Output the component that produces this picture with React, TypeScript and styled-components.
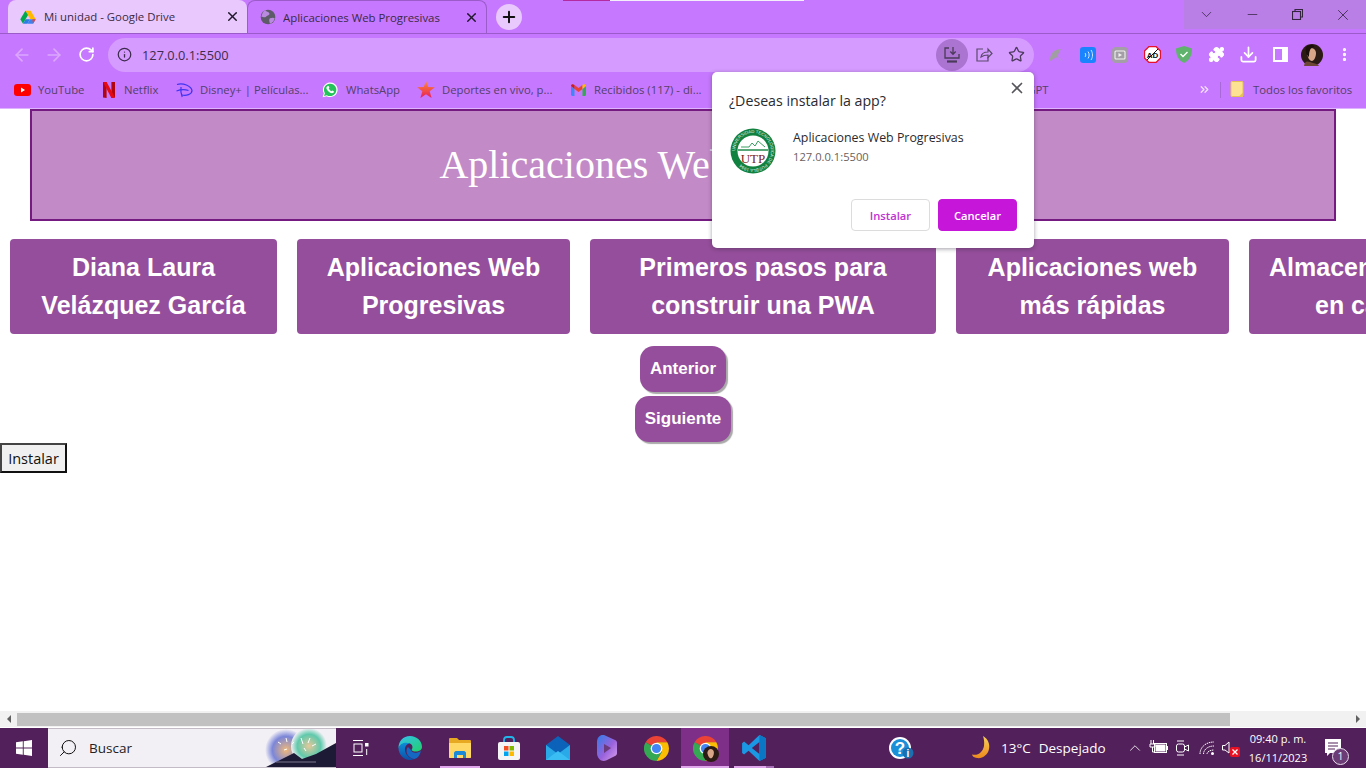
import React from "react";
import styled, { createGlobalStyle } from "styled-components";
import { ArrowLeft, ArrowRight, RotateCw, Info, Star, Puzzle, Download, EllipsisVertical, X, Plus, ChevronDown, Minus, ChevronUp, ChevronsRight, Search } from "lucide-react";

const UI = `"Open Sans", "Noto Sans", "Liberation Sans", sans-serif`;

const Global = createGlobalStyle`
  html, body { margin: 0; padding: 0; background: #fff; overflow: hidden; }
  * { box-sizing: border-box; }
`;

const Screen = styled.div`
  position: relative;
  width: 1366px;
  height: 768px;
  display: flex;
  flex-direction: column;
  overflow: hidden;
  font-family: ${UI};
`;
const EdgeStrip = styled.div`
  position: absolute;
  top: 0;
  left: 563px;
  width: 241px;
  height: 1px;
  background: linear-gradient(90deg, #b42aa0 0, #b42aa0 47px, #f3eefa 47px, #f3eefa 100%);
`;
const TabStrip = styled.div`
  height: 34px;
  flex: none;
  display: flex;
  align-items: flex-start;
  padding-left: 8px;
  background: #c678fe;
  border-bottom: 1px solid #9b5cc9;
`;
const Tab = styled.div<{ $active?: boolean; $w: number }>`
  width: ${(p) => p.$w}px;
  height: 33px;
  flex: none;
  display: flex;
  align-items: center;
  gap: ${(p) => (p.$active ? 7 : 8)}px;
  padding: 0 7px 0 12px;
  border-radius: 8px 8px 0 0;
  background: ${(p) => (p.$active ? "#c678fe" : "#e9c8fe")};
  border: ${(p) => (p.$active ? "1px solid #9b5cc9" : "none")};
  border-bottom: none;
  color: #3a2a44;
  font-size: 11.4px;
  white-space: nowrap;
`;
const TabTitle = styled.span`
  flex: 1;
  overflow: hidden;
`;
const CloseGlyph = styled(X)`
  color: #20182a;
  flex: none;
`;
const NewTab = styled.div`
  width: 26px;
  height: 26px;
  margin: 4px 0 0 9px;
  border-radius: 50%;
  background: #e9c8fe;
  display: flex;
  align-items: center;
  justify-content: center;
  color: #111;
`;
const WindowControls = styled.div`
  margin-left: auto;
  display: flex;
  height: 29px;
  width: 182px;
  background: #ba7fe6;
`;
const WinBtn = styled.div`
  flex: 1;
  display: flex;
  align-items: center;
  justify-content: center;
  color: #33243f;
`;
const Toolbar = styled.div`
  height: 43px;
  flex: none;
  display: flex;
  align-items: center;
  padding: 0 0 2px 6px;
  background: #c678fe;
`;
const ToolBtn = styled.div<{ $tone?: string }>`
  width: 32px;
  height: 32px;
  flex: none;
  display: flex;
  align-items: center;
  justify-content: center;
  color: ${(p) => p.$tone || "#fff"};
`;
const Omnibox = styled.div`
  width: 926px;
  height: 34px;
  margin: 0 6px;
  border-radius: 17px;
  background: #d59bff;
  display: flex;
  align-items: center;
  padding: 0 2px 0 9px;
  color: #3d2b4d;
  font-size: 12.8px;
  flex: none;
`;
const Url = styled.span`
  margin-left: 10px;
  flex: 1;
`;
const InstallHalo = styled(ToolBtn)`
  border-radius: 50%;
  background: #ab74d1;
`;
const Bookmarks = styled.div`
  height: 32px;
  flex: none;
  display: flex;
  align-items: center;
  padding-bottom: 6px;
  background: #c678fe;
  border-bottom: 1px solid #dfb4ff;
  color: #54406a;
  font-size: 11.3px;
  white-space: nowrap;
`;
const Bookmark = styled.div<{ $left: number; $gap: number; $w: number }>`
  display: flex;
  flex: none;
  align-items: center;
  gap: ${(p) => p.$gap}px;
  margin-left: ${(p) => p.$left}px;
  width: ${(p) => p.$w}px;
`;
const Divider = styled.div`
  width: 1px;
  height: 16px;
  margin: 0 9px 0 7px;
  background: #a869d8;
`;
const Page = styled.main`
  flex: 1;
  min-height: 0;
  overflow: hidden;
  background: #fff;
  display: flex;
  flex-direction: column;
  align-items: flex-start;
`;
const Banner = styled.header`
  align-self: stretch;
  height: 112px;
  flex: none;
  margin: 0 30px;
  padding-bottom: 2px;
  border: 2px solid #751a80;
  background: #c28bc7;
  display: flex;
  align-items: center;
  justify-content: center;
`;
const BannerTitle = styled.h1`
  margin: 0;
  font: 400 40px "Liberation Serif", serif;
  color: #fff;
`;
const CardRow = styled.nav`
  margin-top: 18px;
  display: flex;
  gap: 20px;
  padding-left: 10px;
`;
const Card = styled.div<{ $w: number }>`
  width: ${(p) => p.$w}px;
  height: 95px;
  flex: none;
  padding: 9px 20px;
  border-radius: 4px;
  background: #954e9b;
  color: #fff;
  text-align: center;
  font: 700 25px/38px "Liberation Sans", sans-serif;
`;
const Pager = styled.div`
  align-self: center;
  margin-top: 12px;
  display: flex;
  flex-direction: column;
  align-items: center;
  gap: 4px;
`;
const PagerBtn = styled.button<{ $w: number }>`
  width: ${(p) => p.$w}px;
  height: 46px;
  padding: 0;
  border: none;
  border-radius: 14px;
  background: #954e9b;
  color: #fff;
  font: 700 17px "Liberation Sans", sans-serif;
  box-shadow: 2px 2px 1px #a9a9a9;
`;
const PlainBtn = styled.button`
  margin-top: 1px;
  width: 67px;
  height: 30px;
  padding: 0;
  border: 2px solid #111;
  border-left-color: #444;
  border-top-color: #444;
  background: #f0f0f0;
  color: #111;
  font: 400 14.5px ${UI};
`;
const HScroll = styled.div`
  height: 16px;
  margin-bottom: 1px;
  flex: none;
  display: flex;
  align-items: center;
  background: #f1f1f1;
  color: #666;
  justify-content: space-between;
`;
const Thumb = styled.div`
  width: 1213px;
  height: 13px;
  margin-right: auto;
  background: #c1c1c1;
`;
const ArrowCell = styled.div<{ $dir: "l" | "r" }>`
  width: 17px;
  flex: none;
  display: flex;
  justify-content: center;
  &::before {
    content: "";
    border-style: solid;
    border-width: 4px 0 4px 4px;
    border-color: transparent transparent transparent #606060;
    transform: ${(p) => (p.$dir === "l" ? "rotate(180deg)" : "none")};
  }
`;
const Taskbar = styled.footer`
  height: 40px;
  flex: none;
  display: flex;
  align-items: center;
  background: #52205a;
  color: #fff;
`;
const StartBtn = styled.div`
  width: 48px;
  height: 40px;
  flex: none;
  display: flex;
  align-items: center;
  justify-content: center;
`;
const SearchBox = styled.div`
  position: relative;
  width: 288px;
  height: 40px;
  flex: none;
  display: flex;
  align-items: center;
  gap: 11px;
  padding-left: 10px;
  background: #f3f0f5;
  border: 1px solid #c3bcc6;
  border-width: 1px 0;
  color: #222;
  font-size: 13.5px;
  overflow: hidden;
`;
const SearchArt = styled.svg`
  position: absolute;
  right: 0;
  top: -1px;
`;
const TaskBtn = styled.div<{ $w: number; $active?: boolean; $line?: number; $lineLeft?: number; $stack?: boolean; $left?: number }>`
  position: relative;
  width: ${(p) => p.$w}px;
  margin-left: ${(p) => p.$left ?? 0}px;
  height: 40px;
  flex: none;
  display: flex;
  align-items: center;
  justify-content: center;
  background: ${(p) => (p.$active ? "#7e3089" : "transparent")};
  &::after {
    content: "";
    display: ${(p) => (p.$line ? "block" : "none")};
    position: absolute;
    bottom: 0;
    left: ${(p) => p.$lineLeft ?? 5}px;
    width: ${(p) => p.$line}px;
    height: 2px;
    background: #e0a6ec;
    box-shadow: ${(p) => (p.$stack ? "8px 0 0 #a76fb5" : "none")};
  }
`;
const TaskAvatar = styled.svg`
  position: absolute;
  left: 22px;
  top: 18px;
`;
const Weather = styled.div`
  margin-left: 52px;
  width: 153px;
  flex: none;
  display: flex;
  align-items: center;
  font-size: 13.5px;
  white-space: nowrap;
`;
const Temp = styled.span`
  margin-left: 9px;
  margin-right: 8px;
`;
const Tray = styled.div`
  display: flex;
  align-items: center;
`;
const TrayBtn = styled.div`
  width: 24px;
  height: 40px;
  display: flex;
  align-items: center;
  justify-content: center;
  flex: none;
`;
const Clock = styled.div`
  width: 70px;
  flex: none;
  font-size: 11px;
  line-height: 19px;
  text-align: center;
  white-space: nowrap;
`;
const Notif = styled.div`
  position: relative;
  margin-left: 12px;
  width: 26px;
  height: 40px;
  flex: none;
`;
const NotifBadge = styled.span`
  position: absolute;
  left: 7px;
  top: 20px;
  width: 17px;
  height: 17px;
  border-radius: 50%;
  border: 1.5px solid #e8dcec;
  background: #6b3c76;
  color: #fff;
  font-size: 10.5px;
  line-height: 14px;
  text-align: center;
`;
const NotifIcon = styled.svg`
  position: absolute;
  left: 0;
  top: 11px;
`;
const Popup = styled.aside`
  position: absolute;
  left: 712px;
  top: 72px;
  width: 322px;
  height: 176px;
  padding: 20px 17px 0;
  background: #fff;
  border-radius: 5px;
  box-shadow: 0 1px 4px rgba(50, 40, 60, 0.45);
  color: #2a2a2e;
`;
const PopupClose = styled(X)`
  position: absolute;
  right: 8px;
  top: 7px;
  color: #55555a;
`;
const PopupTitle = styled.div`
  font-size: 14.2px;
  line-height: 18px;
`;
const PopupBody = styled.div`
  display: flex;
  margin-top: 18px;
  gap: 17px;
  padding-left: 1px;
`;
const AppName = styled.div`
  margin-top: 1px;
  font-size: 12.4px;
  line-height: 17px;
`;
const AppUrl = styled.div`
  margin-top: 2px;
  font-size: 11.2px;
  line-height: 17px;
  color: #6a5f60;
`;
const PopupActions = styled.div`
  margin-top: 25px;
  display: flex;
  justify-content: flex-end;
  gap: 8px;
`;
const PopupBtn = styled.button<{ $primary?: boolean }>`
  width: 79px;
  height: 32px;
  padding: 0;
  border-radius: 4px;
  border: 1px solid ${(p) => (p.$primary ? "#c616d9" : "#dcdcdc")};
  background: ${(p) => (p.$primary ? "#c616d9" : "#fff")};
  color: ${(p) => (p.$primary ? "#fff" : "#c030d2")};
  font: 600 11.2px ${UI};
`;

const Drive = () => (
  <svg width="16" height="16" viewBox="0 0 24 24">
    <path d="M8 2.500h8l7.500 13h-8z" fill="#ffba00" />
    <path d="M8 2.500L.5 15.500l4 6.500L12 9z" fill="#00a94b" />
    <path d="M4.500 22l4-6.500H15L11 22z" fill="#2a7de1" />
    <path d="M11 22h8.500l4-6.500H15z" fill="#3b82f0" />
    <path d="M19.500 22l4-6.500h-5z" fill="#e8453c" />
  </svg>
);
const Globe = () => (
  <svg width="16" height="16" viewBox="0 0 24 24">
    <circle cx="12" cy="12" r="11" fill="#5d5a6a" />
    <path d="M8 1.500c1 3 5 2 6 5s-3 3-5 5-5 0-7 0C3 7 5 3 8 1.500zM15 14c3-1 6-1 7 0-1 4-3 7-7 8-1-3-2-6 0-8z" fill="#b98ae0" />
  </svg>
);
const YouTube = () => (
  <svg width="17" height="12" viewBox="0 0 17 12">
    <rect width="17" height="12" rx="3" fill="#f00" />
    <path d="M7 3.500l4 2.500-4 2.500z" fill="#fff" />
  </svg>
);
const Netflix = () => (
  <svg width="12" height="16" viewBox="0 0 12 16">
    <path d="M0 0h3.600v16L0 15.600z" fill="#b1060f" />
    <path d="M8.400 0H12v15.600l-3.600.4z" fill="#b1060f" />
    <path d="M0 0h3.600L12 15.600l-3.600.4z" fill="#e50914" />
  </svg>
);
const Disney = () => (
  <svg width="17" height="16" viewBox="0 0 17 16" fill="none" stroke="#3d34f2" strokeWidth="1.200">
    <path d="M1 2.500c6-2 14 1.500 15 6 0 4-6 5.500-10 4.500" />
    <path d="M5 5c-.4 3 0 7 1.200 10" />
    <path d="M0.500 9c4-1.500 9-1.500 12-.5" />
  </svg>
);
const WhatsApp = () => (
  <svg width="16" height="16" viewBox="0 0 24 24">
    <path d="M1 23l1.800-6A11 11 0 1 1 7 21.200z" fill="#fff" />
    <path d="M3 21l1.300-4.300A9.300 9.300 0 1 1 7.300 19.700z" fill="#25c35c" />
    <path d="M8 6.500c.6-1 1.600-1 2.100 0l1 2-1.100 1.300c1 1.900 2.200 3.100 4.100 4.100l1.300-1.100 2 1c1 .5 1 1.500 0 2.100-2 1.800-5 1-8-2s-3.900-5.400-1.400-7.400z" fill="#fff" />
  </svg>
);
const Sport = () => (
  <svg width="18" height="17" viewBox="0 0 24 23">
    <defs>
      <linearGradient id="sg" x1="0.500" y1="0" x2="0.500" y2="1">
        <stop offset="0" stopColor="#ff8a2e" />
        <stop offset="1" stopColor="#e81f5c" />
      </linearGradient>
    </defs>
    <path d="M12 0l3 8 9 .5-7 5.500 2.500 9L12 18l-7.500 5L7 14 0 8.500 9 8z" fill="url(#sg)" />
  </svg>
);
const Gmail = () => (
  <svg width="15" height="12" viewBox="0 0 15 12">
    <path d="M0 2v8.500C0 11.300.7 12 1.500 12H3.500V5z" fill="#4285f4" />
    <path d="M15 2v8.500c0 .8-.7 1.500-1.500 1.500h-2V5z" fill="#34a853" />
    <path d="M11.500 1L7.500 4 3.500 1v4l4 3 4-3z" fill="#ea4335" />
    <path d="M0 2c0-2 2-2.500 3.500-1V5z" fill="#c5221f" />
    <path d="M15 2c0-2-2-2.500-3.500-1V5z" fill="#fbbc04" />
  </svg>
);
const Folder = () => (
  <svg width="14" height="17" viewBox="0 0 14 17">
    <rect x="1" y="0.500" width="12" height="15" rx="1" fill="#fde293" stroke="#e5c258" />
    <path d="M9 15.500l4-4v4z" fill="#e5c258" />
  </svg>
);
const InstallIcon = () => (
  <svg width="18" height="18" viewBox="0 0 18 18" fill="none" stroke="#4b3a5a" strokeWidth="1.300">
    <path d="M6 2H2v10h14V8" />
    <path d="M10 1v7M7.300 5.500L10 8.300l2.700-2.800" />
    <path d="M4 15.500h10" strokeWidth="2.200" />
  </svg>
);
const ShareIcon = () => (
  <svg width="18" height="18" viewBox="0 0 18 18" fill="none" stroke="#5a4a6c" strokeWidth="1.200">
    <path d="M8 3H2v12h11v-4" />
    <path d="M6 11c.5-3.500 3.500-5 7-5V3l4 4.500-4 4V9c-3 0-5 .5-7 2z" />
  </svg>
);
const Umbrella = () => (
  <svg width="16" height="16" viewBox="0 0 16 16">
    <path d="M2 14C1.500 7 6 2 13 2l-2.500 4.500-1 3.500-3.500 1.500z" fill="#a09ea3" />
    <path d="M10 10l4 4" stroke="#b98ae0" strokeWidth="1.200" />
  </svg>
);
const WaveExt = () => (
  <svg width="16" height="16" viewBox="0 0 16 16" fill="none">
    <rect width="16" height="16" rx="3" fill="#1a84ff" />
    <path d="M5 6c1 1 1 3 0 4M8 4.500c1.500 2 1.500 5 0 7M11 3c2 3 2 7 0 10" stroke="#cfe4ff" strokeWidth="1" />
  </svg>
);
const CastExt = () => (
  <svg width="16" height="16" viewBox="0 0 16 16">
    <rect width="16" height="16" rx="4" fill="#a49ea6" />
    <rect x="3" y="4" width="10" height="8" rx="1" fill="none" stroke="#f3f3f3" strokeWidth="1.100" />
    <path d="M6.500 6l3.500 2-3.500 2z" fill="#f3f3f3" />
  </svg>
);
const AdBlock = () => (
  <svg width="17" height="17" viewBox="0 0 17 17">
    <path d="M5 .5h7L16.500 5v7L12 16.500H5L.5 12V5z" fill="#fff" stroke="#e8102a" strokeWidth="1.300" />
    <text x="8.500" y="11.500" textAnchor="middle" fontSize="8" fontWeight="700" fontFamily="Liberation Sans" fill="#111">AD</text>
    <path d="M14 3L3 14" stroke="#111" strokeWidth="1" />
  </svg>
);
const Shield = () => (
  <svg width="16" height="17" viewBox="0 0 16 17">
    <path d="M8 0l8 2.500C16 9 14 14 8 17 2 14 0 9 0 2.500z" fill="#5fb36d" />
    <path d="M4.500 8l2.500 2.500 4.500-4.500" fill="none" stroke="#fff" strokeWidth="1.400" />
  </svg>
);
const SidePanel = () => (
  <svg width="15" height="15" viewBox="0 0 15 15">
    <path d="M0 0h15v15H0zM2 2v11h7V2z" fill="#fff" fillRule="evenodd" />
  </svg>
);
const Avatar = ({ size = 22 }: { size?: number }) => (
  <svg width={size} height={size} viewBox="0 0 22 22">
    <circle cx="11" cy="11" r="11" fill="#2c1a14" />
    <path d="M8 5c3-2 7 0 7 4 0 4-2 8-4 8-3 0-4-4-5-7 0-2 1-4 2-5z" fill="#d9a589" />
    <path d="M3 22c1-7 5-4 9-3 3 1 5 1 6 3z" fill="#6d4636" />
    <path d="M5 3C9 0 14 1 13 3 9 3 8 8 8 13 5 11 4 6 5 3z" fill="#1b0e0b" />
  </svg>
);
const AppLogo = () => (
  <svg width="46" height="46" viewBox="0 0 46 46">
    <circle cx="23" cy="23" r="22.500" fill="#11813f" />
    <circle cx="23" cy="23" r="15.500" fill="#fff" />
    <path id="logoRing" d="M5 23a18 18 0 1 1 36 0a18 18 0 1 1-36 0" fill="none" />
    <text fontSize="4.300" fontFamily="Liberation Sans" fill="#e6f4ea">
      <textPath href="#logoRing">UNIVERSIDAD TECNOLÓGICA DE PUEBLA 1994</textPath>
    </text>
    <path d="M11 19h8l3-4 3 3 3-5 7 6" fill="none" stroke="#38a060" strokeWidth="1" />
    <path d="M8 22h30" stroke="#11813f" strokeWidth="1.400" />
    <text x="23" y="35" textAnchor="middle" fontFamily="Liberation Serif" fontSize="13" fill="#7a2320">UTP</text>
  </svg>
);
const WinLogo = () => (
  <svg width="16" height="16" viewBox="0 0 16 16" fill="#fff">
    <path d="M0 2.300L6.800 1.300V7.500H0zM7.700 1.200L16 0V7.500H7.700zM0 8.400H6.800V14.700L0 13.700zM7.700 8.400H16V16L7.700 14.800z" />
  </svg>
);
const TaskView = () => (
  <svg width="18" height="18" viewBox="0 0 18 18" fill="none" stroke="#fff" strokeWidth="1">
    <path d="M1 1.500h10M1 16.500h10" />
    <rect x="2" y="5" width="8" height="8" />
    <rect x="13.500" y="4.500" width="2.500" height="2.500" fill="#fff" />
    <path d="M14.700 10v6" />
  </svg>
);
const Edge = () => (
  <svg width="24" height="24" viewBox="0 0 24 24">
    <defs>
      <linearGradient id="eg" x1="0" y1="0" x2="1" y2="1">
        <stop offset="0" stopColor="#35c1f1" />
        <stop offset="1" stopColor="#1fd06a" />
      </linearGradient>
      <linearGradient id="eb" x1="0" y1="0" x2="0" y2="1">
        <stop offset="0" stopColor="#0c8fd8" />
        <stop offset="1" stopColor="#0c4fa8" />
      </linearGradient>
    </defs>
    <path d="M12 0c7 0 12 5 12 11 0 3-3 4.500-6 4.500-2 0-3.500-.5-4.500-1.500C15 12 15 9 12 7.500 8 6 3 8 .5 12 .5 5 5 0 12 0z" fill="url(#eg)" />
    <path d="M.5 12C2 7 8 5.500 12 7.500c-3 0-5.500 3-5 7 .5 4 4 8 9.500 8.500C14 24 12 24 11 24 5 23.500.5 18 .5 12z" fill="url(#eb)" />
    <path d="M13 14c1 3 5 4 10 1-1 4-3 7-6.500 8-4.500-.5-8-4-8-8 0-1.500 .5-3 1.500-4z" fill="#1467c2" />
  </svg>
);
const Explorer = () => (
  <svg width="24" height="22" viewBox="0 0 24 22">
    <path d="M1 2a1 1 0 0 1 1-1h7l2 2h11a1 1 0 0 1 1 1v16a1 1 0 0 1-1 1H2a1 1 0 0 1-1-1z" fill="#e8a922" />
    <path d="M1 6h22v14a1 1 0 0 1-1 1H2a1 1 0 0 1-1-1z" fill="#ffd866" />
    <path d="M6 21v-5c0-1 1-2 2-2h8c1 0 2 1 2 2v5h-3v-3H9v3z" fill="#1c8ad6" />
  </svg>
);
const Store = () => (
  <svg width="24" height="24" viewBox="0 0 24 24">
    <path d="M7 7V4a3 3 0 0 1 3-3h4a3 3 0 0 1 3 3v3" fill="none" stroke="#21b4e8" strokeWidth="1.800" />
    <rect x="1" y="6" width="22" height="18" rx="2" fill="#f5f5f5" />
    <rect x="7" y="10" width="4.500" height="4.500" fill="#f25022" />
    <rect x="12.500" y="10" width="4.500" height="4.500" fill="#7fba00" />
    <rect x="7" y="15.500" width="4.500" height="4.500" fill="#00a4ef" />
    <rect x="12.500" y="15.500" width="4.500" height="4.500" fill="#ffb900" />
  </svg>
);
const Mail = () => (
  <svg width="24" height="24" viewBox="0 0 24 24">
    <path d="M12 0l12 9v15H0V9z" fill="#0c62b8" />
    <path d="M0 9l12 9 12-9v15H0z" fill="#29a9e8" />
    <path d="M0 24l12-9 12 9z" fill="#39bdf3" />
  </svg>
);
const Copilot = () => (
  <svg width="20" height="26" viewBox="0 0 20 26">
    <defs>
      <linearGradient id="cp" x1="0" y1="0" x2="1" y2="1">
        <stop offset="0" stopColor="#2f7ee8" />
        <stop offset="0.550" stopColor="#9a62dc" />
        <stop offset="1" stopColor="#d9a0ea" />
      </linearGradient>
    </defs>
    <path d="M7 0l11 5c1.500.7 2 1.500 2 3v10c0 1.500-.5 2.300-2 3L9 25.500c-3 1-6 0-7.500-2.500C.5 21.500 0 20 0 18V7c0-4 3-8 7-7z" fill="url(#cp)" />
    <path d="M7 9l7 4-7 5z" fill="#6a3a7c" />
  </svg>
);
const Chrome = () => (
  <svg width="25" height="25" viewBox="0 0 24 24">
    <path d="M12 12L1.600 6A12 12 0 0 1 22.390 6H12z" fill="#ea4335" />
    <path d="M1.600 6A12 12 0 0 0 12 24l5.200-9L12 12z" fill="#34a853" />
    <path d="M22.390 6A12 12 0 0 1 12 24l5.200-9L12 6z" fill="#fbbc04" />
    <circle cx="12" cy="12" r="5.600" fill="#fff" />
    <circle cx="12" cy="12" r="4.400" fill="#4285f4" />
  </svg>
);
const VSCode = () => (
  <svg width="24" height="26" viewBox="0 0 22 24">
    <path d="M16 0l6 3v18l-6 3-10-9.500L1.800 18 0 16.500V7.500L1.800 6l4.200 3.500zM16 6.500L9 12l7 5.500z" fill="#1a98e4" fillRule="evenodd" />
    <path d="M16 0l6 3v18l-6 3z" fill="#0b76c4" />
  </svg>
);
const HelpIcon = () => (
  <svg width="26" height="24" viewBox="0 0 26 24">
    <circle cx="11" cy="12" r="11" fill="#fff" />
    <circle cx="11" cy="12" r="9" fill="#1b90d8" />
    <text x="11" y="18" textAnchor="middle" fontFamily="Liberation Sans" fontWeight="700" fontSize="17" fill="#fff">?</text>
    <circle cx="19" cy="17" r="5.500" fill="#1b6fb0" />
    <text x="19" y="21" textAnchor="middle" fontFamily="Liberation Sans" fontWeight="700" fontSize="10" fill="#fff">i</text>
  </svg>
);
const Moon = () => (
  <svg width="22" height="24" viewBox="0 0 18 24">
    <defs>
      <linearGradient id="mn" x1="0" y1="0" x2="0" y2="1">
        <stop offset="0" stopColor="#f8cf5a" />
        <stop offset="1" stopColor="#ec8a1c" />
      </linearGradient>
    </defs>
    <path d="M11 0c5 3 7 8 6 13-1 6-7 10-12 9-3-.5-5-2-5-3.500C6 20 11 16 12 10c.5-4 0-7-1-10z" fill="url(#mn)" />
  </svg>
);
const Battery = () => (
  <svg width="20" height="18" viewBox="0 0 20 18" fill="none" stroke="#fff" strokeWidth="1">
    <rect x="5.500" y="4.500" width="12" height="9" />
    <rect x="7" y="6" width="9" height="6" fill="#fff" />
    <path d="M18.500 7v4M2 1v4M4.500 1v4M1 5h5v3H1zM3.500 8v5h2" />
  </svg>
);
const Camera = () => (
  <svg width="18" height="18" viewBox="0 0 18 18" fill="none" stroke="#fff" strokeWidth="1">
    <rect x="2.500" y="5" width="8" height="8" rx="2" />
    <path d="M10.500 8l4-2v6l-4-2M3 2h7M3 16h7" />
  </svg>
);
const Wifi = () => (
  <svg width="18" height="18" viewBox="0 0 18 18" fill="none" stroke="#fff" strokeWidth="1" strokeDasharray="1.500 .7">
    <path d="M2 15C2 8 8 3 16 3" />
    <path d="M5.500 15c0-4 4-8 10.500-8" />
    <path d="M9 15c0-2 3-4 7-4" />
    <circle cx="14.500" cy="14.500" r="1.500" fill="#fff" stroke="none" />
  </svg>
);
const Speaker = () => (
  <svg width="20" height="20" viewBox="0 0 20 20">
    <path d="M1.500 7.500H4L8 4v11L4 12H1.500z" fill="none" stroke="#fff" strokeWidth="1" />
    <rect x="9" y="9" width="10" height="10" rx="2" fill="#e81123" />
    <path d="M11.500 11.500l5 5m0-5l-5 5" stroke="#fff" strokeWidth="1.300" />
  </svg>
);

const bookmarkData = [
  { icon: <YouTube />, text: "YouTube", left: 14, gap: 7, w: 89 },
  { icon: <Netflix />, text: "Netflix", left: 0, gap: 9, w: 73 },
  { icon: <Disney />, text: "Disney+ | Películas...", left: 0, gap: 7, w: 146 },
  { icon: <WhatsApp />, text: "WhatsApp", left: 0, gap: 8, w: 95 },
  { icon: <Sport />, text: "Deportes en vivo, p...", left: 0, gap: 7, w: 154 },
  { icon: <Gmail />, text: "Recibidos (117) - di...", left: 0, gap: 8, w: 150 },
  { icon: <span />, text: "Chat GPT", left: 279, gap: 0, w: 100 },
];
const cards = [
  { t: "Diana Laura Velázquez García", w: 267 },
  { t: "Aplicaciones Web Progresivas", w: 273 },
  { t: "Primeros pasos para construir una PWA", w: 346 },
  { t: "Aplicaciones web más rápidas", w: 273 },
  { t: "Almacenamiento en caché", w: 239 },
];

export default function App() {
  return (
    <Screen>
      <Global />
      <TabStrip>
        <Tab $w={239}>
          <Drive />
          <TabTitle>Mi unidad - Google Drive</TabTitle>
          <CloseGlyph size={15} strokeWidth={2.4} />
        </Tab>
        <Tab $active $w={240}>
          <Globe />
          <TabTitle>Aplicaciones Web Progresivas</TabTitle>
          <CloseGlyph size={15} strokeWidth={2.4} />
        </Tab>
        <NewTab>
          <Plus size={18} strokeWidth={2.6} />
        </NewTab>
        <WindowControls>
          <WinBtn><ChevronDown size={17} strokeWidth={1.1} /></WinBtn>
          <WinBtn><Minus size={15} strokeWidth={1.2} /></WinBtn>
          <WinBtn>
            <svg width="11" height="11" viewBox="0 0 11 11" fill="none" stroke="#33243f" strokeWidth="1.100">
              <rect x="0.500" y="2.500" width="8" height="8" />
              <path d="M3 2.500V.5h7.500V8H8.500" />
            </svg>
          </WinBtn>
          <WinBtn><X size={18} strokeWidth={1.1} /></WinBtn>
        </WindowControls>
      </TabStrip>
      <Toolbar>
        <ToolBtn $tone="#dca6ff"><ArrowLeft size={20} strokeWidth={2} /></ToolBtn>
        <ToolBtn $tone="#dca6ff"><ArrowRight size={20} strokeWidth={2} /></ToolBtn>
        <ToolBtn><RotateCw size={17} strokeWidth={2.4} /></ToolBtn>
        <Omnibox>
          <Info size={15} strokeWidth={2} />
          <Url>127.0.0.1:5500</Url>
          <InstallHalo><InstallIcon /></InstallHalo>
          <ToolBtn><ShareIcon /></ToolBtn>
          <ToolBtn $tone="#4b3a5a"><Star size={17} strokeWidth={1.8} /></ToolBtn>
        </Omnibox>
        <ToolBtn><Umbrella /></ToolBtn>
        <ToolBtn><WaveExt /></ToolBtn>
        <ToolBtn><CastExt /></ToolBtn>
        <ToolBtn><AdBlock /></ToolBtn>
        <ToolBtn><Shield /></ToolBtn>
        <ToolBtn><Puzzle size={17} fill="#fff" strokeWidth={1.5} /></ToolBtn>
        <ToolBtn><Download size={19} strokeWidth={2.2} /></ToolBtn>
        <ToolBtn><SidePanel /></ToolBtn>
        <ToolBtn><Avatar /></ToolBtn>
        <ToolBtn><EllipsisVertical size={17} strokeWidth={2.6} /></ToolBtn>
      </Toolbar>
      <Bookmarks>
        {bookmarkData.map((b) => (
          <Bookmark key={b.text} $left={b.left} $gap={b.gap} $w={b.w}>
            {b.icon}
            <span>{b.text}</span>
          </Bookmark>
        ))}
        <Bookmark $left={98} $gap={0} $w={15}>
          <ChevronsRight size={13} color="#f3e2ff" strokeWidth={2.4} />
        </Bookmark>
        <Divider />
        <Bookmark $left={0} $gap={9} $w={125}>
          <Folder />
          <span>Todos los favoritos</span>
        </Bookmark>
      </Bookmarks>
      <Page>
        <Banner>
          <BannerTitle>Aplicaciones Web Progresivas</BannerTitle>
        </Banner>
        <CardRow>
          {cards.map((c) => (
            <Card key={c.t} $w={c.w}>{c.t}</Card>
          ))}
        </CardRow>
        <Pager>
          <PagerBtn $w={86}>Anterior</PagerBtn>
          <PagerBtn $w={96}>Siguiente</PagerBtn>
        </Pager>
        <PlainBtn>Instalar</PlainBtn>
      </Page>
      <HScroll>
        <ArrowCell $dir="l" />
        <Thumb />
        <ArrowCell $dir="r" />
      </HScroll>
      <Taskbar>
        <StartBtn><WinLogo /></StartBtn>
        <SearchBox>
          <Search size={20} strokeWidth={1.2} color="#111" transform="scale(-1,1)" />
          <span>Buscar</span>
          <SearchArt width="72" height="40" viewBox="0 0 72 40">
            <defs>
              <radialGradient id="f1">
                <stop offset="0" stopColor="#f0b878" />
                <stop offset="0.650" stopColor="#7b86d8" />
                <stop offset="1" stopColor="#f3f0f5" />
              </radialGradient>
              <radialGradient id="f2">
                <stop offset="0" stopColor="#e6c89a" />
                <stop offset="0.650" stopColor="#5fc9ac" />
                <stop offset="1" stopColor="#f3f0f5" />
              </radialGradient>
            </defs>
            <circle cx="22" cy="22" r="21" fill="url(#f1)" />
            <circle cx="45" cy="18" r="18" fill="url(#f2)" />
            <path d="M0 40L20 30l10-5 8 6 14-5 20-11v25z" fill="#1c1a34" />
            <path d="M12 34h40" stroke="#7c7690" strokeWidth="1" />
            <path d="M14 14l3 2M22 10l1 4M30 14l-2 2M37 10l2 6M46 10l-2 5M52 16l-4 2M20 22l3-1M40 20l2 3" stroke="#fff" strokeWidth="1" />
          </SearchArt>
        </SearchBox>
        <TaskBtn $w={49}><TaskView /></TaskBtn>
        <TaskBtn $w={50}><Edge /></TaskBtn>
        <TaskBtn $w={49} $line={40} $lineLeft={5}><Explorer /></TaskBtn>
        <TaskBtn $w={49}><Store /></TaskBtn>
        <TaskBtn $w={49}><Mail /></TaskBtn>
        <TaskBtn $w={49}><Copilot /></TaskBtn>
        <TaskBtn $w={50}><Chrome /></TaskBtn>
        <TaskBtn $w={48} $active $line={48} $lineLeft={0}>
          <Chrome />
          <TaskAvatar width="16" height="16" viewBox="0 0 22 22">
            <circle cx="11" cy="11" r="11" fill="#2c1a14" />
            <path d="M8 5c3-2 7 0 7 4 0 4-2 8-4 8-3 0-4-4-5-7 0-2 1-4 2-5z" fill="#d9a589" />
          </TaskAvatar>
        </TaskBtn>
        <TaskBtn $w={50} $line={32} $lineLeft={5} $stack><VSCode /></TaskBtn>
        <TaskBtn $w={32} $left={107}><HelpIcon /></TaskBtn>
        <Weather>
          <Moon />
          <Temp>13°C</Temp>
          <span>Despejado</span>
        </Weather>
        <Tray>
          <TrayBtn><ChevronUp size={18} strokeWidth={1.1} /></TrayBtn>
          <TrayBtn><Battery /></TrayBtn>
          <TrayBtn><Camera /></TrayBtn>
          <TrayBtn><Wifi /></TrayBtn>
          <TrayBtn><Speaker /></TrayBtn>
        </Tray>
        <Clock>
          <div>09:40 p. m.</div>
          <div>16/11/2023</div>
        </Clock>
        <Notif>
          <NotifIcon width="17" height="17" viewBox="0 0 17 17">
            <path d="M0 0h16v14H5l-3 3v-3H0z" fill="#fff" />
            <path d="M3 4h10M3 7h10M3 10h7" stroke="#52205a" strokeWidth="1" />
          </NotifIcon>
          <NotifBadge>1</NotifBadge>
        </Notif>
      </Taskbar>
      <EdgeStrip />
      <Popup>
        <PopupClose size={18} strokeWidth={2.2} />
        <PopupTitle>¿Deseas instalar la app?</PopupTitle>
        <PopupBody>
          <AppLogo />
          <div>
            <AppName>Aplicaciones Web Progresivas</AppName>
            <AppUrl>127.0.0.1:5500</AppUrl>
          </div>
        </PopupBody>
        <PopupActions>
          <PopupBtn>Instalar</PopupBtn>
          <PopupBtn $primary>Cancelar</PopupBtn>
        </PopupActions>
      </Popup>
    </Screen>
  );
}
